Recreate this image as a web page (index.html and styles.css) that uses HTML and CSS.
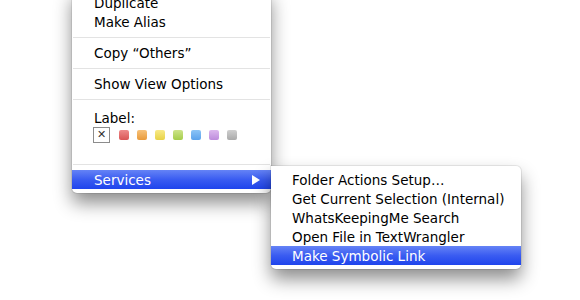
FILE: index.html
```html
<!DOCTYPE html>
<html lang="en">
<head>
  <meta charset="UTF-8">
  <title>Finder context menu</title>
  <link rel="stylesheet" href="styles.css">
</head>
<body>

<!-- Context menu -->
<div class="menu">
  <div class="item">Duplicate</div>
  <div class="item">Make Alias</div>
  <div class="sep"></div>
  <div class="item">Copy “Others”</div>
  <div class="sep"></div>
  <div class="item">Show View Options</div>
  <div class="sep"></div>
  <div class="label-row">Label:</div>
  <div class="swatches">
    <div class="swatch-none">✕</div>
    <div class="swatch red"></div>
    <div class="swatch orange"></div>
    <div class="swatch yellow"></div>
    <div class="swatch green"></div>
    <div class="swatch blue"></div>
    <div class="swatch purple"></div>
    <div class="swatch gray"></div>
  </div>
  <div class="sep"></div>
  <div class="item selected has-sub">
    Services
    <span class="arrow"></span>
    <!-- Services submenu -->
    <div class="submenu">
      <div class="item">Folder Actions Setup…</div>
      <div class="item">Get Current Selection (Internal)</div>
      <div class="item">WhatsKeepingMe Search</div>
      <div class="item">Open File in TextWrangler</div>
      <div class="item selected">Make Symbolic Link</div>
    </div>
  </div>
</div>

</body>
</html>
```

FILE: styles.css
```css
body {
  margin: 0;
  padding-top: 1px;
  min-height: 299px;
  font-family: 'DejaVu Sans', sans-serif;
  font-size: 13.5px;
  color: #000;
  background-color: #fff;
}
.menu {
  position: relative;
  width: 199px;
  margin: -12px 0 0 72px;
  padding: 4px 0;
  background: #fff;
  border-radius: 0 0 5px 5px;
  box-shadow: 0 0 0 1px rgba(0,0,0,0.08), 0 10px 18px rgba(0,0,0,0.45);
}
.item {
  height: 19px;
  line-height: 21px;
  padding-left: 22px;
  white-space: nowrap;
}
.item.selected {
  color: #fff;
  background: linear-gradient(#6583f6, #3a5cf1 50%, #1f44ec);
}
.has-sub {
  position: relative;
}
.arrow {
  position: absolute;
  right: 11px;
  top: 5px;
  width: 0;
  height: 0;
  border-top: 5px solid transparent;
  border-bottom: 5px solid transparent;
  border-left: 8px solid #fff;
}
.sep {
  height: 1px;
  margin: 6px 1px 5px;
  background-color: #e3e3e3;
}
.label-row {
  height: 19px;
  line-height: 21px;
  padding: 3px 0 0 22px;
}
.swatches {
  display: flex;
  align-items: center;
  gap: 8px;
  height: 16px;
  padding: 0 0 15px 21px;
}
.swatch-none {
  width: 15px;
  height: 14px;
  border: 1px solid #8c8c8c;
  margin-right: 1px;
  font-size: 11px;
  font-weight: bold;
  line-height: 14px;
  text-align: center;
  color: #333;
}
.swatch {
  width: 10px;
  height: 10px;
  border-radius: 2px;
}
.red { background: linear-gradient(#ee8a8a, #d95555); }
.orange { background: linear-gradient(#f7c27a, #e99a3a); }
.yellow { background: linear-gradient(#f8ea88, #e8d245); }
.green { background: linear-gradient(#cde48a, #a5cd4a); }
.blue { background: linear-gradient(#8cc4f6, #5ba2ec); }
.purple { background: linear-gradient(#dcb8ee, #bd8cdc); }
.gray { background: linear-gradient(#cfcfcf, #aaaaaa); }
.submenu {
  position: absolute;
  left: 199px;
  top: -4px;
  width: 250px;
  padding: 4px 0;
  color: #000;
  line-height: 21px;
  background: #fff;
  border-radius: 0 5px 5px 5px;
  box-shadow: 0 0 0 1px rgba(0,0,0,0.08), 0 10px 18px rgba(0,0,0,0.45);
}
.submenu .item {
  padding-left: 21px;
}
```
